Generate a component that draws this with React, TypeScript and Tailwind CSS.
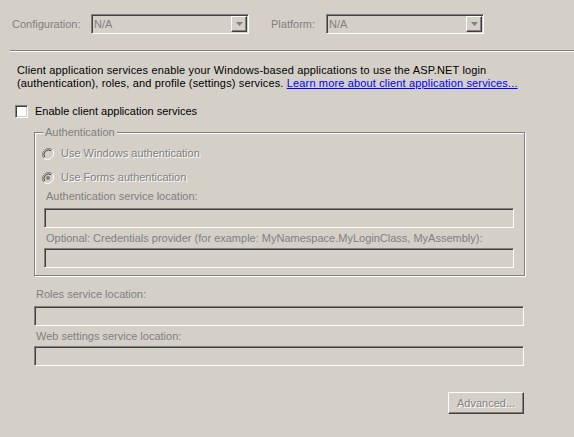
import React from 'react';

const sunken =
  'border border-t-[#808080] border-l-[#808080] border-b-white border-r-white shadow-[inset_1px_1px_0_#404040,inset_-1px_-1px_0_#d4d0c8]';

const raised =
  'border border-t-white border-l-white border-b-[#404040] border-r-[#404040] shadow-[inset_-1px_-1px_0_#808080]';

const ComboBox: React.FC<{ value: string }> = ({ value }) => (
  <div className={`flex items-center w-[158px] h-[20px] ${sunken}`}>
    <span className="flex-1 pl-[2px] text-[#808080] leading-[13px]">{value}</span>
    <div className={`w-[16px] h-[16px] mr-[1px] flex items-center justify-center bg-[#d4d0c8] ${raised}`}>
      <svg width="7" height="4" viewBox="0 0 7 4">
        <path d="M0 0h7L3.5 4z" fill="#808080" />
      </svg>
    </div>
  </div>
);

const TextBox: React.FC<{ className: string }> = ({ className }) => (
  <div className={`h-[20px] bg-[#d4d0c8] ${sunken} ${className}`} />
);

const Radio: React.FC<{ checked?: boolean; label: string; className?: string }> = ({ checked, label, className }) => (
  <div className={`flex items-center h-[13px] ${className ?? ''}`}>
    <svg width="12" height="12" viewBox="0 0 12 12" className="shrink-0">
      <path d="M10.2 1.8A6 6 0 0 0 1.8 10.2" stroke="#808080" strokeWidth="1" fill="none" />
      <path d="M1.8 10.2A6 6 0 0 0 10.2 1.8" stroke="#ffffff" strokeWidth="1" fill="none" />
      <path d="M9.2 2.8A4.6 4.6 0 0 0 2.8 9.2" stroke="#404040" strokeWidth="1" fill="none" />
      {checked && <circle cx="6" cy="6" r="2" fill="#808080" />}
    </svg>
    <span className="ml-[7px] text-[#808080] [text-shadow:1px_1px_0_#fff] leading-[13px] whitespace-nowrap">{label}</span>
  </div>
);

const Label: React.FC<{ children: React.ReactNode; className?: string }> = ({ children, className }) => (
  <div className={`h-[13px] leading-[13px] text-[#808080] whitespace-nowrap ${className ?? ''}`}>{children}</div>
);

export default function App() {
  return (
    <div className="w-[574px] h-[437px] bg-[#d4d0c8] flex flex-col text-[11px] text-black font-['Liberation_Sans',Arial,sans-serif] overflow-hidden">
      <div className="mt-[14px] h-[20px] flex items-center">
        <span className="pl-[12px] w-[91px] text-[#808080]">Configuration:</span>
        <ComboBox value="N/A" />
        <span className="ml-[22px] w-[55px] text-[#808080]">Platform:</span>
        <ComboBox value="N/A" />
      </div>

      <div className="mt-[16px] ml-[10px] h-[2px] border-t border-t-[#808080] border-b border-b-white" />

      <div className="mt-[12px] ml-[17px] leading-[13px] whitespace-nowrap tracking-[0.15px]">
        Client application services enable your Windows-based applications to use the ASP.NET login
        <br />
        (authentication), roles, and profile (settings) services.{' '}
        <a href="#" className="text-[#0000ff] underline">Learn more about client application services...</a>
      </div>

      <div className="mt-[15px] flex items-center h-[13px]">
        <div className={`ml-[15px] w-[13px] h-[13px] bg-white ${sunken}`} />
        <span className="ml-[7px] leading-[13px]">Enable client application services</span>
      </div>

      <div className="mt-[14px] ml-[34px] w-[491px] h-[144px] relative border border-[#808080] shadow-[inset_1px_1px_0_#fff,1px_1px_0_#fff] flex flex-col">
        <span className="absolute -top-[7px] left-[8px] px-[2px] bg-[#d4d0c8] leading-[13px] text-[#808080]">Authentication</span>
        <Radio label="Use Windows authentication" className="mt-[14px] ml-[7px]" />
        <Radio checked label="Use Forms authentication" className="mt-[11px] ml-[7px]" />
        <Label className="mt-[6px] ml-[11px]">Authentication service location:</Label>
        <TextBox className="mt-[5px] ml-[9px] w-[470px]" />
        <Label className="mt-[4px] ml-[11px]">
          Optional: Credentials provider (for example: MyNamespace.MyLoginClass, MyAssembly):
        </Label>
        <TextBox className="mt-[3px] ml-[9px] w-[470px]" />
      </div>

      <Label className="mt-[12px] ml-[36px]">Roles service location:</Label>
      <TextBox className="mt-[5px] ml-[34px] w-[490px]" />
      <Label className="mt-[4px] ml-[36px]">Web settings service location:</Label>
      <TextBox className="mt-[3px] ml-[34px] w-[490px]" />

      <button
        disabled
        className={`mt-[26px] ml-[448px] w-[76px] h-[22px] bg-[#d4d0c8] text-[#808080] [text-shadow:1px_1px_0_#fff] ${raised}`}
      >
        Advanced...
      </button>
    </div>
  );
}
